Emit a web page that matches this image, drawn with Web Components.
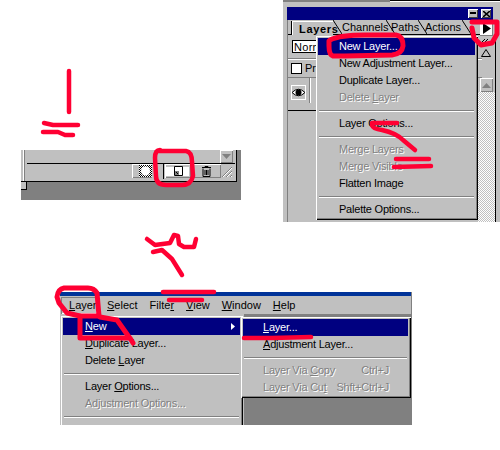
<!DOCTYPE html>
<html><head><meta charset="utf-8">
<style>
html,body{margin:0;padding:0;background:#fff}
body{width:500px;height:450px;position:relative;overflow:hidden;font:11px "Liberation Sans",Arial,sans-serif;color:#000}
u{text-underline-offset:1px}
</style></head><body>
<layers-panel>
  <win-menu slot="menu" style="left:33px;top:36px;width:162px;padding-bottom:2px">
    <menu-item active>New Layer...</menu-item>
    <menu-item>New Adjustment Layer...</menu-item>
    <menu-item>Duplicate Layer...</menu-item>
    <menu-item disabled>Delete <u>L</u>ayer</menu-item>
    <menu-sep></menu-sep>
    <menu-item>Layer Options...</menu-item>
    <menu-sep></menu-sep>
    <menu-item disabled>Merge Layers</menu-item>
    <menu-item disabled>Merge Visible</menu-item>
    <menu-item>Flatten Image</menu-item>
    <menu-sep></menu-sep>
    <menu-item>Palette Options...</menu-item>
  </win-menu>
</layers-panel>
<button-strip></button-strip>
<menu-shot>
  <win-menu slot="main" style="left:1px;top:24px;width:182px;height:120px">
    <menu-item active arrow><u>N</u>ew</menu-item>
    <menu-item><u>D</u>uplicate Layer...</menu-item>
    <menu-item>Delete <u>L</u>ayer</menu-item>
    <menu-sep></menu-sep>
    <menu-item>Layer <u>O</u>ptions...</menu-item>
    <menu-item disabled>Adjustment Options...</menu-item>
    <menu-sep></menu-sep>
    <menu-item arrow>Add Layer Mask</menu-item>
  </win-menu>
  <win-menu slot="sub" style="left:181px;top:25px;width:170px;padding-bottom:2px">
    <menu-item active><u>L</u>ayer...</menu-item>
    <menu-item><u>A</u>djustment Layer...</menu-item>
    <menu-sep></menu-sep>
    <menu-item disabled short="Ctrl+J">Layer Via <u>C</u>opy</menu-item>
    <menu-item disabled short="Shft+Ctrl+J">Layer Via Cu<u>t</u></menu-item>
  </win-menu>
</menu-shot>
<ink-layer></ink-layer>
<script>
function el(name,css,html){
  customElements.define(name,class extends HTMLElement{
    constructor(){super();const s=this.attachShadow({mode:'open'});s.innerHTML='<style>'+css+'</style>'+html;}
  });
}
const DITHER='background-color:#c0c0c0;background-image:conic-gradient(#fff 25%,#c0c0c0 0 50%,#fff 0 75%,#c0c0c0 0);background-size:2px 2px;';

el('win-menu',`:host{display:block;position:absolute;box-sizing:border-box;background:#c0c0c0;padding:2px 3px 0 2px;overflow:hidden;
  box-shadow:inset 1px 1px 0 #fff,inset -1px -1px 0 #000,inset -2px -2px 0 #808080}`,`<slot></slot>`);

customElements.define('menu-item',class extends HTMLElement{
  constructor(){super();const s=this.attachShadow({mode:'open'});
    const short=this.getAttribute('short')||'';const arrow=this.hasAttribute('arrow');
    const pad=this.closest('[slot=main]')?22:(this.closest('[slot=sub]')?20:21);
    s.innerHTML=`<style>
    :host{display:flex;align-items:center;box-sizing:border-box;height:17px;padding:0 19px 1px ${pad}px;white-space:nowrap;font:11px "Liberation Sans",Arial,sans-serif;color:#000;position:relative;letter-spacing:-.22px}
    :host([active]){background:#000080;color:#fff}
    :host([disabled]){color:#808080;text-shadow:1px 1px 0 #fff}
    .s{margin-left:auto}
    svg{margin-left:auto;margin-right:-14px}
    </style><span><slot></slot></span>${short?`<span class="s">${short}</span>`:''}${arrow?`<svg width="4" height="7" viewBox="0 0 4 7"><path d="M0 0L4 3.5L0 7Z" fill="currentColor"/></svg>`:''}`;
  }
});

el('menu-sep',`:host{display:block;height:9px;box-sizing:border-box;padding:4px 1px 0}
  i{display:block;height:1px;background:#808080;box-shadow:0 1px 0 #fff}`,`<i></i>`);

el('layers-panel',`
:host{display:block;position:absolute;left:283px;top:0;width:217px;height:222px;background:#c0c0c0;overflow:hidden}
.cap{height:7px;box-sizing:border-box;background:linear-gradient(#808080 0 2px,#c0c0c0 0);position:relative}
.cap i{position:absolute;left:107px;right:0;top:0;height:1px;background:#000}
.cap b{position:absolute;left:107px;right:0;top:1px;height:1px;background:#fff}
.title{height:13px;margin:0 7px 0 4px;background:#000080;display:flex;justify-content:flex-end;align-items:center;gap:3px;padding-right:2px}
.tb{width:10px;height:9px;background:#c0c0c0;box-shadow:inset 1px 1px 0 #fff,inset -1px -1px 0 #404040;display:grid;place-items:center}
.main{display:flex;height:202px}
.left{width:195px;margin-left:4px;border-left:1px solid #808080;box-sizing:border-box}
.tabs{height:15px;display:flex;border-bottom:1px solid #000;box-sizing:border-box;font:11px "Liberation Sans",Arial,sans-serif;align-items:flex-end;padding-left:4px;position:relative}
.tab{height:14px;display:flex;align-items:center;position:relative;white-space:nowrap}
.tab.on{width:41px;background:#c0c0c0;border:solid #fff;border-width:1px 0 0 1px;box-shadow:-1px 0 0 #000;box-sizing:border-box;margin-bottom:-1px;font-weight:bold;padding-left:6px;letter-spacing:.7px;z-index:1}
.sl{display:block;width:9px;height:14px;flex:none}
.row1{height:24px;box-sizing:border-box;padding:5px 0 0 4px;border-bottom:1px solid #808080}
.sel{width:40px;height:13px;background:#fff;border:1px solid #000;box-sizing:border-box;line-height:12px;padding-left:1px;letter-spacing:.3px;font-size:11px;overflow:hidden}
.row2{height:19px;box-sizing:border-box;display:flex;align-items:center;gap:3px;padding-left:3px;border-bottom:1px solid #808080;box-shadow:inset 0 1px 0 #fff;font-size:11px}
.chk{width:9px;height:9px;background:#fff;border:1px solid #000;flex:none}
.row3{height:33px;box-sizing:border-box;display:flex;align-items:flex-start;padding:7px 0 0 3px;border-bottom:1px solid #000;gap:3px}
.eye{width:15px;height:15px;background:#c0c0c0;box-shadow:inset 1px 1px 0 #fff,inset -1px -1px 0 #fff;display:grid;place-items:center}
.vs{width:1px;height:25px;background:#808080;margin-top:-7px;box-shadow:1px 0 0 #fff}
.th{width:12px;height:14px;margin-left:3px;background:#c0c0c0;box-shadow:inset 1px 1px 0 #808080}
.right{width:17px;display:flex;flex-direction:column;box-sizing:border-box;margin-left:-4px;position:relative}
.more{height:15px;background:#fff;margin:1px 2px 0 2px;display:grid;place-items:center;box-shadow:inset -1px -1px 0 #808080}
.pct{height:7px;margin:1px 3px 0 0;background:#c0c0c0;display:grid;place-items:center}
.tri{height:34px;padding:3px 0 0 3px;box-sizing:border-box}
.up{height:14px;margin:0 2px;background:#c0c0c0;box-shadow:inset 1px 1px 0 #fff,inset -1px -1px 0 #808080;display:grid;place-items:center;flex:none}
.dith{flex:1;${DITHER}}
.edge{width:1px;background:#000;flex:none}
`,`
<div class="cap"><i></i><b></b></div>
<div class="title">
  <div class="tb"><svg width="6" height="5"><path d="M0 1H6V3H0Z" fill="#000"/></svg></div>
  <div class="tb"><svg width="7" height="6"><path d="M0 0L7 6M7 0L0 6" stroke="#000" stroke-width="1.6"/></svg></div>
</div>
<div class="main">
  <div class="left">
    <div class="tabs">
      <div class="tab on">Layers</div>
      <svg class="sl" viewBox="0 0 9 14"><path d="M0 0L9 14" stroke="#000"/></svg>
      <div class="tab" style="width:44px">Channels</div>
      <svg class="sl" style="margin-right:-4px" viewBox="0 0 9 14"><path d="M0 0L9 14" stroke="#000"/></svg>
      <div class="tab" style="width:27px">Paths</div>
      <svg class="sl" style="margin-right:-2px" viewBox="0 0 9 14"><path d="M0 0L9 14" stroke="#000"/></svg>
      <div class="tab" style="width:37px">Actions</div>
      <svg class="sl" viewBox="0 0 9 14"><path d="M0 0L9 14" stroke="#000"/></svg>
    </div>
    <div class="row1"><div class="sel">Norm</div></div>
    <div class="row2"><span class="chk"></span><span>Pre</span></div>
    <div class="row3">
      <div class="eye"><svg width="13" height="9" viewBox="0 0 13 9"><path d="M0 4.500Q6.500 -2 13 4.500Q6.500 11 0 4.500Z" fill="#fff" stroke="#000"/><circle cx="6.500" cy="4.500" r="3" fill="#000"/></svg></div>
      <div class="vs"></div><div class="th"></div>
    </div>
  </div>
  <div class="right">
    <div class="more"><svg width="8" height="11"><path d="M0 0L8 5.500L0 11Z" fill="#000"/></svg></div>
    <div class="pct"><svg width="8" height="5"><path d="M1 4L4 1M4 4L7 1" stroke="#000"/></svg></div>
    <div class="tri"><svg width="10" height="8"><path d="M5 .5L9.500 7.500H.5Z" fill="none" stroke="#000"/></svg></div>
    <div class="up"><svg width="9" height="5"><path d="M4.500 0L9 5H0Z" fill="#808080"/></svg></div>
    <div class="dith"></div>
  </div>
  <div class="edge"></div>
</div>
<slot name="menu"></slot>`);

el('button-strip',`
:host{display:block;position:absolute;left:21px;top:150px;width:220px;height:50px;background:#808080;overflow:hidden}
.body{width:216px;height:32px;box-sizing:border-box;background:#c0c0c0;border-right:1px solid #000;border-bottom:1px solid #000;padding-left:5px;position:relative}
.l{position:absolute;left:2px;top:0;width:1px;height:31px;background:#fff;box-shadow:1px 0 0 #808080}
.up{height:14px;box-sizing:border-box;border-bottom:1px solid #000;display:flex;justify-content:flex-end;padding-right:2px;margin-right:1px;margin-left:1px}
.dn{width:13px;height:13px;background:#c0c0c0;box-shadow:inset 1px 1px 0 #fff,inset -1px -1px 0 #808080;display:grid;place-items:center}
.btns{display:flex;justify-content:flex-end;height:15px;padding-right:3px;box-sizing:border-box}
.b{height:14px;box-shadow:inset 1px 1px 0 #fff,inset -1px -1px 0 #808080;display:grid;place-items:center;box-sizing:border-box}
.notch{width:5px;height:7px;background:#c0c0c0;border-right:1px solid #000;border-bottom:1px solid #000}
.grip{width:12px;height:14px}
`,`
<div class="body">
  <div class="l"></div>
  <div class="up"><div class="dn"><svg width="9" height="5"><path d="M0 0H9L4.500 5Z" fill="#808080"/></svg></div></div>
  <div class="btns">
    <div class="b" style="width:20px;justify-items:end"><svg width="13" height="12" viewBox="0 0 13 12"><defs><pattern id="d" width="2" height="2" patternUnits="userSpaceOnUse"><rect width="2" height="2" fill="#fff"/><rect width="1" height="1" fill="#000"/><rect x="1" y="1" width="1" height="1" fill="#000"/></pattern></defs><rect width="13" height="12" fill="url(#d)"/><circle cx="6.500" cy="6" r="4.500" fill="#fff"/></svg></div>
    <div style="width:3px;border-right:1px solid #000;margin:0 1px 0 8px"></div>
    <div class="b" style="width:26px;background:linear-gradient(#fff,#fff) 0 3px/24px 9px no-repeat"><svg width="9" height="10" viewBox="0 0 9 10"><path d="M.5 .5H8.500V9.500H.5Z" fill="#fff" stroke="#000"/><path d="M1 5H5V9H1Z" fill="#808080"/><path d="M2 6L4 8" stroke="#000"/></svg></div>
    <div class="b" style="width:30px"><svg width="9" height="11" viewBox="0 0 9 11"><path d="M0 1.500H9M3 1.500V.5H6V1.500M1 2.500V10.500H8V2.500M3 4V9M4.500 4V9M6 4V9" stroke="#000" fill="none"/></svg></div>
    <svg class="grip" viewBox="0 0 12 14"><path d="M1 13L11 3M5 13L11 7M9 13L11 11" stroke="#808080"/><path d="M2 13L11 4M6 13L11 8M10 13L11 12" stroke="#fff"/></svg>
  </div>
</div>
<div class="notch"></div>`);

el('menu-shot',`
:host{display:block;position:absolute;left:60px;top:292px;width:352px;height:133px;background:#808080;overflow:hidden}
.blue{height:4px;background:#003399;width:351px}
.bar{height:18px;width:351px;background:#c0c0c0;display:flex;align-items:center;font:11px "Liberation Sans",Arial,sans-serif;box-shadow:0 1px 0 #808080;position:relative}
.bar span{white-space:nowrap}
.on{box-shadow:inset 1px 1px 0 #808080,inset -1px -1px 0 #fff;height:17px;display:flex;align-items:center;margin-left:1px;padding-left:8px;width:36px;box-sizing:border-box}
.on b{font-weight:normal}
.fill{position:absolute;left:0;top:22px;width:184px;height:111px;background:#c0c0c0}
u{text-underline-offset:1px}
`,`
<div class="blue"></div>
<div class="bar">
  <span class="on"><b><u>L</u>ayer</b></span>
  <span style="margin-left:10px"><u>S</u>elect</span>
  <span style="margin-left:12px">Filte<u>r</u></span>
  <span style="margin-left:12px"><u>V</u>iew</span>
  <span style="margin-left:12px"><u>W</u>indow</span>
  <span style="margin-left:12px"><u>H</u>elp</span>
</div>
<div class="fill"></div>
<slot name="main"></slot><slot name="sub"></slot>`);

el('ink-layer',`:host{display:block;position:absolute;left:0;top:0;width:500px;height:450px;pointer-events:none}
svg{display:block}
path{fill:none;stroke:#ff0033;stroke-width:4.500;stroke-linecap:round;stroke-linejoin:round}`,`
<svg width="500" height="450" viewBox="0 0 500 450">
<path d="M69 71V112"/>
<path d="M44 123L53 125H78"/>
<path d="M43 132H58L65 135H73"/>
<path d="M158 151H186Q192 152 192 162L193 176Q191 185 182 185H166Q156 185 156 176L155 158Q155 150 160 150"/>
<path style="stroke-width:5" d="M330 40Q340 35 365 35H396Q403 36 403 46Q402 54 392 55L345 56H333Q329 55 329 46V41"/>
<path style="stroke-width:5" d="M472 22H497V34L492 43L481 45L474 38L472 28"/>
<path d="M372 123H397"/>
<path d="M372 125Q373 129 382 130Q396 133 403 140L415 150"/>
<path d="M396 159H429"/>
<path d="M394 167L431 166"/>
<path d="M147 239L155 245L170 243L174 235L178 236L179 244L184 247L194 247L196 239"/>
<path d="M153 252L162 250L172 259L182 275"/>
<path d="M163 292H214"/>
<path d="M169 300H202"/>
<path style="stroke-width:5" d="M97 293Q94 288 88 288H64Q58 289 57 297L59 303L67 313L80 316H99L97 293"/>
<path style="stroke-width:5" d="M80 316V338H130L133 343M100 317L117 320L129 337"/>
<path d="M244 338L272 338L311 337"/>
</svg>`);
</script>
</body></html>
